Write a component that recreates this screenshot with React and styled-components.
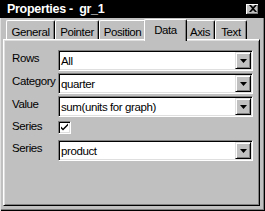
import React from 'react';
import styled, { createGlobalStyle } from 'styled-components';

const GlobalStyle = createGlobalStyle`
  html, body {
    margin: 0;
    padding: 0;
    background: #c0c0c0;
  }
  body {
    font-family: "Liberation Sans", Arial, sans-serif;
    font-size: 11.5px;
    letter-spacing: -0.4px;
    color: #000;
  }
`;

const tabs = [
  { label: 'General', width: 49 },
  { label: 'Pointer', width: 44 },
  { label: 'Position', width: 47 },
  { label: 'Data', width: 39, active: true },
  { label: 'Axis', width: 30 },
  { label: 'Text', width: 32 },
];

const fields = [
  { label: 'Rows', value: 'All' },
  { label: 'Category', value: 'quarter' },
  { label: 'Value', value: 'sum(units for graph)' },
  { label: 'Series', checkbox: true },
  { label: 'Series', value: 'product' },
];

const ArrowDown = () => (
  <svg width="7" height="4" viewBox="0 0 7 4">
    <path d="M0 0h7L3.5 4z" fill="#000" />
  </svg>
);

const CheckMark = () => (
  <svg width="9" height="9" viewBox="0 0 9 9">
    <path d="M1 3.5l2 2 5-5v2l-5 5-2-2z" fill="#000" />
  </svg>
);

const CloseGlyph = () => (
  <svg width="8" height="7" viewBox="0 0 8 7">
    <path d="M0 0h2l2 2 2-2h2L5 3.5 8 7H6L4 5 2 7H0l3-3.5z" fill="#000" />
  </svg>
);

const App = () => {
  return (
    <>
      <GlobalStyle />
      <Window>
        <TitleBar>
          <Title>Properties -&nbsp;&nbsp;gr_1</Title>
          <CloseButton>
            <CloseGlyph />
          </CloseButton>
        </TitleBar>
        <Body>
          <TabRow>
            {tabs.map((t) => (
              <Tab key={t.label} $active={t.active} $width={t.width}>
                {t.label}
              </Tab>
            ))}
          </TabRow>
          <Panel>
            <Form>
              {fields.map((f, i) => (
                <React.Fragment key={i}>
                  <Label $check={f.checkbox}>{f.label}</Label>
                  {f.checkbox ? (
                    <CheckRow>
                      <CheckBox>
                        <CheckMark />
                      </CheckBox>
                    </CheckRow>
                  ) : (
                    <Combo>
                      <ComboText>{f.value}</ComboText>
                      <DropButton>
                        <ArrowDown />
                      </DropButton>
                    </Combo>
                  )}
                </React.Fragment>
              ))}
            </Form>
          </Panel>
        </Body>
      </Window>
    </>
  );
};

const Window = styled.div`
  width: 265px;
  height: 211px;
  display: flex;
  flex-direction: column;
  background: #c0c0c0;
  overflow: hidden;
`;
const TitleBar = styled.div`
  height: 18px;
  flex: none;
  background: #000;
  color: #fff;
  display: flex;
  align-items: center;
  justify-content: space-between;
  padding: 0 6px 0 7px;
`;
const Title = styled.span`
  font-weight: bold;
  font-size: 12.5px;
  letter-spacing: -0.3px;
  white-space: pre;
`;
const CloseButton = styled.div`
  width: 13px;
  height: 11px;
  box-sizing: border-box;
  background: #c0c0c0;
  box-shadow: inset -1px -1px #000, inset 1px 1px #fff, inset -2px -2px #808080;
  display: flex;
  align-items: center;
  justify-content: center;
  padding-bottom: 1px;
`;
const Body = styled.div`
  flex: 1;
  display: flex;
  flex-direction: column;
  border-left: 1px solid #dfdfdf;
  padding: 0 5px 5px 2px;
  box-shadow: inset -1px -1px #000, inset -2px -2px #808080;
`;
const TabRow = styled.div`
  height: 22px;
  display: flex;
  align-items: flex-end;
  padding-left: 3px;
  position: relative;
  z-index: 1;
  margin-bottom: -1px;
`;
const Tab = styled.div`
  box-sizing: border-box;
  width: ${(p) => p.$width + (p.$active ? 4 : 0)}px;
  height: ${(p) => (p.$active ? 22 : 19)}px;
  margin: 0 ${(p) => (p.$active ? -2 : 0)}px ${(p) => (p.$active ? -1 : 1)}px;
  background: #c0c0c0;
  border-top: 1px solid #fff;
  border-left: 1px solid #fff;
  border-right: 1px solid #000;
  border-radius: 2px 2px 0 0;
  box-shadow: inset -1px 0 #808080;
  display: flex;
  justify-content: center;
  padding-top: ${(p) => (p.$active ? 4 : 5)}px;
  line-height: 13px;
  position: relative;
  z-index: ${(p) => (p.$active ? 2 : 1)};
`;
const Panel = styled.div`
  flex: 1;
  border: 1px solid;
  border-color: #fff #000 #000 #fff;
  box-shadow: inset 1px 1px #dfdfdf, inset -1px -1px #808080;
  padding: 10px 0 0 8px;
`;
const Form = styled.div`
  display: grid;
  grid-template-columns: 46px 195px;
  row-gap: 2px;
`;
const Label = styled.div`
  line-height: 13px;
  padding-top: ${(p) => (p.$check ? 1 : 2)}px;
`;
const CheckRow = styled.div`
  height: 17px;
  display: flex;
  align-items: flex-start;
  padding-top: 2px;
`;
const CheckBox = styled.div`
  width: 13px;
  height: 13px;
  box-sizing: border-box;
  background: #fff;
  border: 1px solid;
  border-color: #808080 #fff #fff #808080;
  box-shadow: inset 1px 1px #000, inset -1px -1px #dfdfdf;
  display: flex;
  align-items: center;
  justify-content: center;
`;
const Combo = styled.div`
  height: 21px;
  box-sizing: border-box;
  background: #fff;
  border: 1px solid;
  border-color: #808080 #fff #fff #808080;
  box-shadow: inset 1px 1px #000, inset -1px -1px #dfdfdf;
  display: flex;
  align-items: stretch;
  padding: 1px;
`;
const ComboText = styled.div`
  flex: 1;
  padding: 3px 0 0 1px;
  line-height: 13px;
  white-space: nowrap;
`;
const DropButton = styled.div`
  width: 16px;
  box-sizing: border-box;
  background: #c0c0c0;
  border: 1px solid;
  border-color: #dfdfdf #000 #000 #dfdfdf;
  box-shadow: inset 1px 1px #fff, inset -1px -1px #808080;
  display: flex;
  align-items: center;
  justify-content: center;
`;

export default App;
